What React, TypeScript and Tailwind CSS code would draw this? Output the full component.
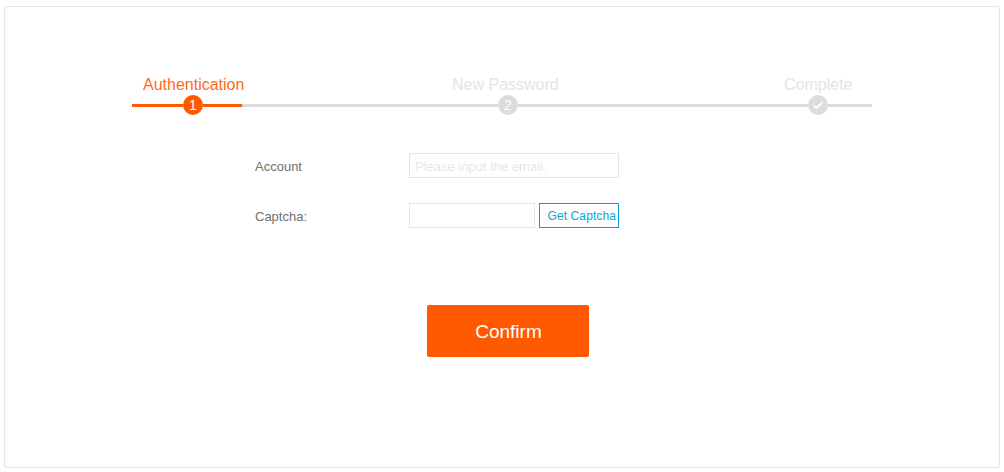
const Check = () => (
  <svg viewBox="0 0 20 20" className="w-5 h-5" fill="none">
    <path d="M5.8 10.4l2.8 2.6L14.4 7.4" stroke="#fff" strokeWidth="1.8" />
  </svg>
);

const Dot = ({ active, children }: { active?: boolean; children: React.ReactNode }) => (
  <div className={`w-5 h-5 shrink-0 rounded-full flex items-center justify-center text-white text-[14px] leading-5 ${active ? 'bg-[#ff5a00]' : 'bg-[#dcdcdc]'}`}>
    {children}
  </div>
);

export default function App() {
  return (
    <div className="w-[1004px] h-[472px] bg-white pt-1.5 pl-1 font-['Liberation_Sans',Arial,sans-serif]">
      <div className="w-[996px] h-[462px] border border-[#e4e4e4] rounded-[3px] pt-[68px] pl-[127px] shadow-[0_0_1px_#eeeeee]">
        {/* Steps */}
        <div className="w-[740px]">
          <div className="flex text-[16px] leading-5 text-[#e4e4e4]">
            <span className="ml-[11px] w-[102px] whitespace-nowrap text-[#ff6a1a]">Authentication</span>
            <span className="ml-[207px] w-[108px] whitespace-nowrap">New Password</span>
            <span className="ml-[224px]">Complete</span>
          </div>
          <div className="flex items-center">
            <div className="w-[51px] h-[3px] bg-[#ff5a00]" />
            <Dot active>1</Dot>
            <div className="w-[39px] h-[3px] bg-[#ff5a00]" />
            <div className="w-[256px] h-[3px] bg-[#dcdcdc]" />
            <Dot>2</Dot>
            <div className="w-[290px] h-[3px] bg-[#dcdcdc]" />
            <Dot><Check /></Dot>
            <div className="flex-1 h-[3px] bg-[#dcdcdc]" />
          </div>
        </div>

        {/* Form */}
        <div className="ml-[123px] mt-[38px] text-[13px] text-[#707070]">
          <div className="flex items-center h-[25px]">
            <label className="w-[154px] pt-[2px]">Account</label>
            <input
              placeholder="Please input the email."
              className="w-[210px] h-[25px] border border-[#e4e4e4] px-[5px] pt-[2px] text-[13px] outline-none placeholder:text-[#e8e8e8]"
            />
          </div>
          <div className="flex items-center h-[25px] mt-[25px]">
            <label className="w-[154px] pt-[2px]">Captcha:</label>
            <input className="w-[126px] h-[25px] border border-[#e4e4e4] outline-none" />
            <button className="w-[80px] h-[25px] ml-[4px] border border-[#00a2d4] text-[12px] tracking-[0.1px] text-[#0ba4d0] text-right pr-[2px] whitespace-nowrap">
              Get Captcha
            </button>
          </div>
        </div>

        {/* Submit */}
        <button className="block ml-[295px] mt-[77px] w-[162px] h-[52px] pt-[2px] pl-[1px] rounded-[2px] bg-[#ff5a00] text-white text-[19px]">
          Confirm
        </button>
      </div>
    </div>
  );
}
